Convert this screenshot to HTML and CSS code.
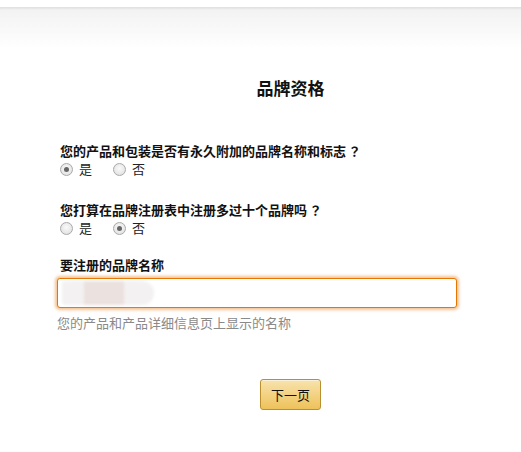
FILE: index.html
```html
<!DOCTYPE html>
<html lang="zh">
<head>
<meta charset="utf-8">
<link rel="stylesheet" href="styles.css">
</head>
<body>
<div class="topbar"></div>
<div class="band"></div>
<main class="main">
  <h1 class="title">品牌资格</h1>
  <div class="q">
    <div class="qtext">您的产品和包装是否有永久附加的品牌名称和标志<span class="fw" lang="ja">？</span></div>
    <div class="opts">
      <label class="opt"><span class="radio checked"></span>是</label>
      <label class="opt"><span class="radio"></span>否</label>
    </div>
  </div>
  <div class="q q2">
    <div class="qtext">您打算在品牌注册表中注册多过十个品牌吗<span class="fw" lang="ja">？</span></div>
    <div class="opts">
      <label class="opt"><span class="radio"></span>是</label>
      <label class="opt"><span class="radio checked"></span>否</label>
    </div>
  </div>
  <div class="field">
    <div class="qtext">要注册的品牌名称</div>
    <div class="inputwrap">
      <div class="input"></div>
      <div class="blur"><div class="blur-in"></div></div>
    </div>
    <div class="hint">您的产品和产品详细信息页上显示的名称</div>
  </div>
  <div class="actions">
    <button class="btn">下一页</button>
  </div>
</main>
</body>
</html>
```
FILE: styles.css
```css
* { box-sizing: border-box; }
html, body { margin: 0; padding: 0; background: #fff; }
body {
  font-family: "Noto Sans CJK SC", "Liberation Sans", sans-serif;
  color: #111;
  font-size: 13px;
  width: 521px;
  height: 452px;
  overflow: hidden;
}
.topbar { height: 7px; background: #fff; }
.band {
  height: 42px;
  border-top: 1px solid #e2e2e2;
  box-shadow: inset 0 2px 2px -1px rgba(0,0,0,0.06);
  background: linear-gradient(#f2f2f2, #fbfbfb 70%, #fff);
}
.main { padding-left: 60px; }
.title {
  margin: 28px 0 0;
  text-align: center;
  font-size: 17px;
  line-height: 21px;
  font-weight: 700;
  color: #111;
}
.q { margin-top: 44px; }
.q2 { margin-top: 23px; }
.qtext {
  font-weight: 700;
  font-size: 13px;
  line-height: 18px;
  color: #111;
}
.fw {
  font-family: "Noto Sans CJK JP", "Noto Sans CJK SC", sans-serif;
  display: inline-block;
  width: 15px;
  text-align: right;
}
.opts { display: flex; height: 18px; align-items: center; }
.opt {
  display: flex;
  align-items: center;
  width: 53px;
  line-height: 18px;
  color: #222;
}
.radio {
  width: 13px;
  height: 13px;
  border-radius: 50%;
  border: 1px solid #a9a9a9;
  background: radial-gradient(circle at 50% 40%, #fafafa, #dcdcdc);
  margin-right: 6px;
  position: relative;
}
.radio.checked::after {
  content: "";
  position: absolute;
  left: 3px; top: 3px;
  width: 5px; height: 5px;
  border-radius: 50%;
  background: #666;
}
.field { margin-top: 19px; }
.inputwrap { position: relative; margin: 4px 0 0 -3px; width: 400px; }
.input {
  height: 30px;
  border: 1px solid #e77600;
  border-radius: 3px;
  box-shadow: 0 0 3px 2px rgba(228,121,17,0.45);
  background: #fff;
}
.blur {
  position: absolute;
  left: 5px; top: 3px;
  width: 92px; height: 24px;
  border-radius: 4px 14px 14px 4px;
  background: #f3f1f1;
  filter: blur(1.5px);
}
.blur-in {
  position: absolute;
  left: 22px; top: 0;
  width: 40px; height: 24px;
  background: #ebe1de;
}
.hint {
  margin: 6px 0 0 -3px;
  line-height: 18px;
  color: #8a8a8a;
  font-size: 13px;
}
.actions { display: flex; justify-content: center; margin-top: 47px; }
.btn {
  width: 61px;
  height: 31px;
  padding: 0;
  font-family: inherit;
  font-size: 13px;
  color: #111;
  border: 1px solid #b8902e;
  border-radius: 3px;
  background: linear-gradient(#f8e3ad, #eec25a);
  box-shadow: inset 0 1px 0 rgba(255,255,255,0.5);
}
```
